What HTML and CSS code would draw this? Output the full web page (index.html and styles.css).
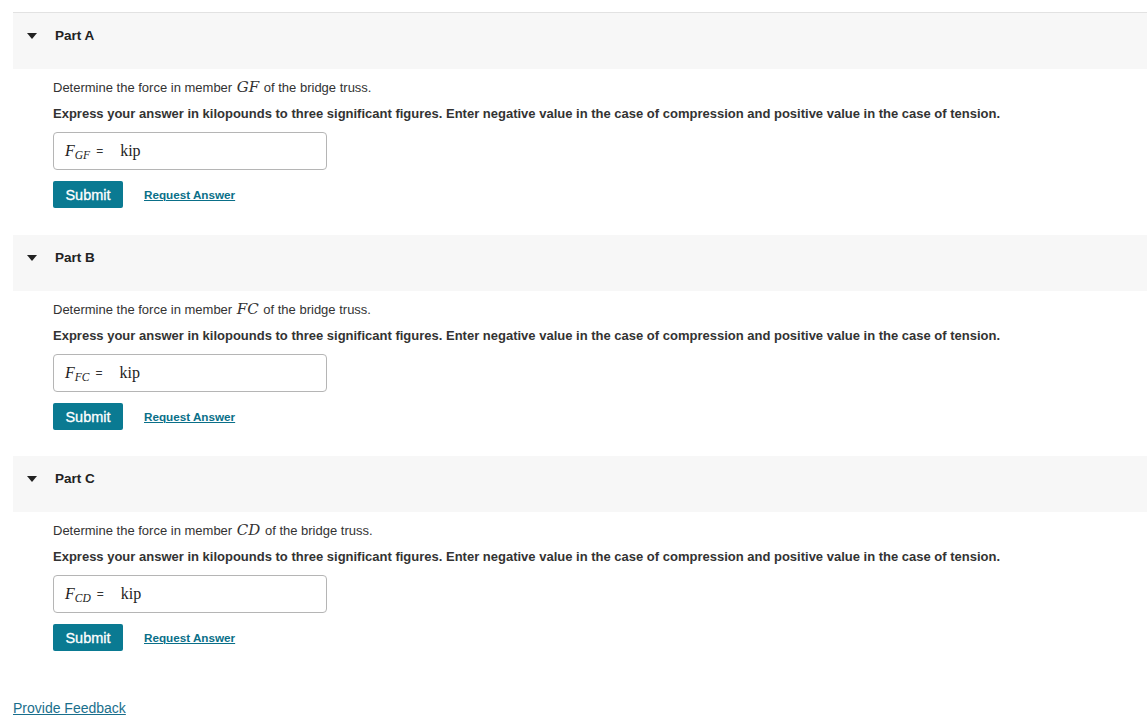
FILE: index.html
```html
<!DOCTYPE html>
<html>
<head>
<meta charset="utf-8">
<link rel="stylesheet" href="styles.css">
</head>
<body>
<div class="page">
  <div class="parts">
    <section class="part">
      <div class="part-head"><span class="caret"></span><span class="part-title">Part A</span></div>
      <div class="part-body">
        <p class="prompt">Determine the force in member <span class="math">GF</span> of the bridge truss.</p>
        <p class="instr">Express your answer in kilopounds to three significant figures. Enter negative value in the case of compression and positive value in the case of tension.</p>
        <div class="answer"><span class="var">F<sub>GF</sub></span><span class="eq">=</span><span class="unit">kip</span></div>
        <div class="actions"><button class="submit">Submit</button><a class="req" href="#">Request Answer</a></div>
      </div>
    </section>
    <section class="part">
      <div class="part-head"><span class="caret"></span><span class="part-title">Part B</span></div>
      <div class="part-body">
        <p class="prompt">Determine the force in member <span class="math">FC</span> of the bridge truss.</p>
        <p class="instr">Express your answer in kilopounds to three significant figures. Enter negative value in the case of compression and positive value in the case of tension.</p>
        <div class="answer"><span class="var">F<sub>FC</sub></span><span class="eq">=</span><span class="unit">kip</span></div>
        <div class="actions"><button class="submit">Submit</button><a class="req" href="#">Request Answer</a></div>
      </div>
    </section>
    <section class="part">
      <div class="part-head"><span class="caret"></span><span class="part-title">Part C</span></div>
      <div class="part-body">
        <p class="prompt">Determine the force in member <span class="math">CD</span> of the bridge truss.</p>
        <p class="instr">Express your answer in kilopounds to three significant figures. Enter negative value in the case of compression and positive value in the case of tension.</p>
        <div class="answer"><span class="var">F<sub>CD</sub></span><span class="eq">=</span><span class="unit">kip</span></div>
        <div class="actions"><button class="submit">Submit</button><a class="req" href="#">Request Answer</a></div>
      </div>
    </section>
  </div>
  <a class="feedback" href="#">Provide Feedback</a>
</div>
</body>
</html>
```
FILE: styles.css
```css
html, body {
  margin: 0;
  padding: 0;
  background: #fff;
}
body {
  font-family: "Liberation Sans", Arial, sans-serif;
  color: #333;
  font-size: 13px;
}
.page {
  padding: 12px 0 0 13px;
}
.parts {
  border-top: 1px solid #e2e2e2;
}
.part-head {
  height: 56px;
  box-sizing: border-box;
  background: #f7f7f7;
  display: flex;
  align-items: flex-start;
  padding-top: 14px;
}
.caret {
  width: 0;
  height: 0;
  border-left: 5px solid transparent;
  border-right: 5px solid transparent;
  border-top: 6px solid #222;
  margin-left: 14px;
  margin-right: 18px;
  margin-top: 6px;
}
.part-title {
  font-weight: bold;
  font-size: 13.5px;
  line-height: 18px;
  color: #222;
}
.part-body {
  padding: 9px 0 26px 40px;
}
.part:first-child .part-body {
  padding-bottom: 27px;
}
.prompt {
  margin: 0;
  line-height: 18px;
}
.math {
  font-family: "DejaVu Serif", "Liberation Serif", serif;
  font-style: italic;
  font-size: 15px;
  padding: 0 1px;
}
.instr {
  margin: 8px 0 0;
  line-height: 18px;
  font-weight: bold;
}
.answer {
  margin-top: 9px;
  box-sizing: border-box;
  width: 274px;
  height: 38px;
  border: 1px solid #b5b5b5;
  border-radius: 4px;
  display: flex;
  align-items: center;
  padding-left: 11px;
}
.var {
  font-family: "Liberation Serif", "Times New Roman", serif;
  font-style: italic;
  font-size: 16px;
  color: #222;
}
.var sub {
  font-size: 11.5px;
  vertical-align: -3px;
  line-height: 0;
}
.eq {
  font-size: 12px;
  margin-left: 6px;
  color: #333;
}
.unit {
  font-family: "Liberation Serif", "Times New Roman", serif;
  font-size: 16px;
  margin-left: 17px;
  color: #222;
}
.actions {
  margin-top: 11px;
  display: flex;
  align-items: center;
}
.submit {
  width: 70px;
  height: 27px;
  border: none;
  border-radius: 2px;
  background: #0a7a92;
  color: #fff;
  font-family: "Liberation Sans", Arial, sans-serif;
  font-weight: normal;
  font-size: 14.5px;
  padding: 0;
  -webkit-text-stroke: 0.3px #fff;
}
.req {
  margin-left: 21px;
  color: #0a6f88;
  font-weight: bold;
  font-size: 11.7px;
  text-decoration: underline;
}
.feedback {
  display: inline-block;
  margin-top: 23px;
  color: #1a6f8c;
  font-size: 14px;
  text-decoration: underline;
}
```
